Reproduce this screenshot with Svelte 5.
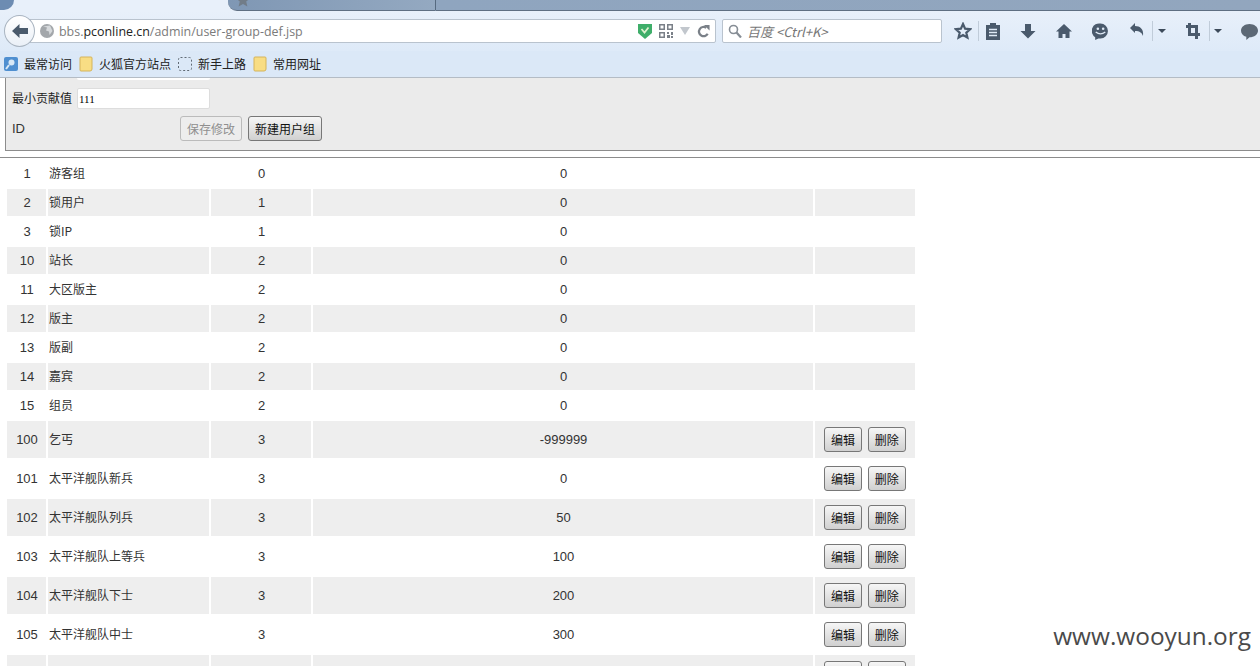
<script>
	const rows = [
		{ id: 1, name: '游客组', type: 0, min: 0 },
		{ id: 2, name: '锁用户', type: 1, min: 0 },
		{ id: 3, name: '锁IP', type: 1, min: 0 },
		{ id: 10, name: '站长', type: 2, min: 0 },
		{ id: 11, name: '大区版主', type: 2, min: 0 },
		{ id: 12, name: '版主', type: 2, min: 0 },
		{ id: 13, name: '版副', type: 2, min: 0 },
		{ id: 14, name: '嘉宾', type: 2, min: 0 },
		{ id: 15, name: '组员', type: 2, min: 0 },
		{ id: 100, name: '乞丐', type: 3, min: -999999, edit: true },
		{ id: 101, name: '太平洋舰队新兵', type: 3, min: 0, edit: true },
		{ id: 102, name: '太平洋舰队列兵', type: 3, min: 50, edit: true },
		{ id: 103, name: '太平洋舰队上等兵', type: 3, min: 100, edit: true },
		{ id: 104, name: '太平洋舰队下士', type: 3, min: 200, edit: true },
		{ id: 105, name: '太平洋舰队中士', type: 3, min: 300, edit: true },
		{ id: '', name: '', type: '', min: '', edit: true }
	];
</script>

<div class="browser">
	<div class="tabs">
		<div class="tab-corner"></div>
		<div class="tab active"></div>
		<div class="tab other">
			<svg class="star" viewBox="0 0 14 14"><path d="M7 0l2 5 5 .4-3.800 3.200 1.200 5L7 11l-4.400 2.600 1.200-5L0 5.400 5 5z" fill="#717c88" /></svg>
		</div>
		<div class="tab-rest"></div>
	</div>

	<div class="nav">
		<div class="urlbar">
			<span class="back">
				<svg viewBox="0 0 16 14" width="16" height="14"><path d="M0 7l7.500-7v4H16v6H7.500v4z" fill="#4a5a6c" /></svg>
			</span>
			<svg class="globe" viewBox="0 0 14 14" width="14" height="14"><circle cx="7" cy="7" r="7" fill="#a3a7ab" /><path d="M3 2.500l4 1-1 3 3 1 .5 3.500 3-4-2.500-5.500z" fill="#d6d9dc" /></svg>
			<span class="url">bbs.<b>pconline.cn</b>/admin/user-group-def.jsp</span>
			<span class="url-icons">
				<svg viewBox="0 0 14 16" width="14" height="16"><path d="M0 1h14v9l-7 6-7-6z" fill="#3fae6a" /><path d="M3.500 6L6.500 9.500l4-5" stroke="#dff2cf" stroke-width="1.800" fill="none" /></svg>
				<svg viewBox="0 0 14 14" width="14" height="14"><path d="M0 0h6v6H0zM1.500 1.500v3h3v-3zM8 0h6v6H8zM9.500 1.500v3h3v-3zM0 8h6v6H0zM1.500 9.500v3h3v-3zM8 8h2v2H8zM12 8h2v3h-2zM8 11h3v3H8zM12 12h2v2h-2z" fill="#7a8088" fill-rule="evenodd" /></svg>
				<svg viewBox="0 0 10 8" width="10" height="8"><path d="M0 0h10L5 8z" fill="#c2c7cd" /></svg>
				<svg viewBox="0 0 14 14" width="13" height="13"><path d="M11.500 9.500A5 5 0 1 1 10 3" stroke="#7a8088" stroke-width="2.400" fill="none" /><path d="M7.500 0H13.500V6z" fill="#7a8088" /></svg>
			</span>
		</div>
		<div class="search">
			<svg viewBox="0 0 14 14" width="14" height="14"><circle cx="5.500" cy="5.500" r="4" stroke="#868d95" stroke-width="1.600" fill="none" /><path d="M8.500 8.500l4.500 5" stroke="#868d95" stroke-width="2.200" /></svg>
			<span>百度 &lt;Ctrl+K&gt;</span>
		</div>
		<div class="tools">
			<svg viewBox="0 0 18 18" width="18" height="18"><path d="M9 2l2.100 4.700 5 .5-3.800 3.400 1.100 5L9 13l-4.400 2.600 1.100-5-3.800-3.400 5-.5z" fill="none" stroke="#4a5a6c" stroke-width="2.200" /></svg>
			<i class="sep"></i>
			<svg viewBox="0 0 16 18" width="16" height="18"><path d="M1 3h4V1h6v2h4v15H1z" fill="#4a5a6c" /><path d="M4 7.500h8M4 10.500h8M4 13.500h8" stroke="#dfeaf6" stroke-width="1.300" /></svg>
			<svg class="gap1" viewBox="0 0 16 16" width="16" height="16"><path d="M5 1h6v7h4.500L8 15.500.5 8H5z" fill="#4a5a6c" /></svg>
			<svg class="gap2" viewBox="0 0 16 16" width="16" height="16"><path d="M8 1L0 8.500h2.500V15h4v-4h3v4h4V8.500H16z" fill="#4a5a6c" /></svg>
			<svg class="gap3" viewBox="0 0 16 16" width="17" height="17"><path d="M8 0.500a7 7 0 0 1 0 14H6L3 16v-2.700A7 7 0 0 1 8 .5z" fill="#4a5a6c" /><circle cx="5.500" cy="5.500" r="1.200" fill="#dfeaf6" /><circle cx="10.500" cy="5.500" r="1.200" fill="#dfeaf6" /><path d="M3.500 8.500q4.500 3.500 9 0" stroke="#dfeaf6" fill="none" stroke-width="1.300" /></svg>
			<svg class="gap4" viewBox="0 0 14 16" width="14" height="16"><path d="M0 5l5-5v3c5 0 9 3 8 10-1-3-3-5-8-5v2z" fill="#4a5a6c" /></svg>
			<i class="sep small"></i>
			<b class="caret"></b>
			<svg class="gap5" viewBox="0 0 14 16" width="14" height="16"><path d="M3.500 0v11.500H14M0 3.500h10.500V16" fill="none" stroke="#4a5a6c" stroke-width="3" /></svg>
			<i class="sep small last"></i>
			<b class="caret"></b>
			<svg class="gap6" viewBox="0 0 16 16" width="17" height="17"><path d="M8 1c4.400 0 8 2.700 8 6.200s-3.600 6.200-8 6.200L5 16v-3C2 12 0 9.800 0 7.200 0 3.700 3.600 1 8 1z" fill="#5c6875" /></svg>
		</div>
	</div>

	<div class="bookmarks">
		<span class="mark">
			<svg viewBox="0 0 14 14" width="14" height="14"><rect width="14" height="14" rx="2" fill="#4f8fd0" /><circle cx="7.500" cy="5.500" r="3" fill="#d8e8f6" /><path d="M5 8l-3 4" stroke="#d8e8f6" stroke-width="2" /></svg>
			最常访问
		</span>
		<span class="mark">
			<svg viewBox="0 0 14 16" width="14" height="16"><path d="M1 2q0-1 1-1h10q1 0 1 1v11q0 2-2 2H2q-1 0-1-1z" fill="#f8dd84" stroke="#d5b45a" /></svg>
			火狐官方站点
		</span>
		<span class="mark">
			<svg viewBox="0 0 14 14" width="14" height="14"><rect x=".5" y=".5" width="13" height="13" rx="2" fill="none" stroke="#606a74" stroke-dasharray="2 2" /></svg>
			新手上路
		</span>
		<span class="mark">
			<svg viewBox="0 0 14 16" width="14" height="16"><path d="M1 2q0-1 1-1h10q1 0 1 1v11q0 2-2 2H2q-1 0-1-1z" fill="#f8dd84" stroke="#d5b45a" /></svg>
			常用网址
		</span>
	</div>

	<div class="page">
		<div class="panel">
			<div class="clipped"></div>
			<div class="field">
				<label for="min">最小贡献值</label>
				<input id="min" value="111" />
			</div>
			<div class="field actions">
				<span class="id-label">ID</span>
				<button disabled>保存修改</button>
				<button>新建用户组</button>
			</div>
		</div>
		<hr />
		<table>
			<colgroup>
				<col class="c1" />
				<col class="c2" />
				<col class="c3" />
				<col class="c4" />
				<col class="c5" />
			</colgroup>
			<tbody>
				{#each rows as row, i}
					<tr class:odd={i % 2 == 1} class:tall={row.edit}>
						<td class="center">{row.id}</td>
						<td>{row.name}</td>
						<td class="center">{row.type}</td>
						<td class="center">{row.min}</td>
						<td class="ops">
							{#if row.edit}
								<button>编辑</button>
								<button>删除</button>
							{/if}
						</td>
					</tr>
				{/each}
			</tbody>
		</table>
	</div>

	<div class="watermark">www.wooyun.org</div>
</div>

<style>
	:global(body) {
		margin: 0;
		background: #fff;
	}
	.browser {
		position: relative;
		height: 666px;
		overflow: hidden;
		font-family: "Noto Sans CJK SC", "Liberation Sans", sans-serif;
		font-size: 12px;
		color: #222;
	}
	.tabs {
		display: flex;
		height: 11px;
		background: #e8f0fa;
	}
	.tab-corner {
		width: 14px;
		height: 10px;
		background: #6d8cb2;
		border-radius: 0 0 10px 0;
	}
	.tab.active {
		width: 214px;
	}
	.tab.other {
		width: 208px;
		height: 11px;
		background: linear-gradient(90deg, #7f97b4, #94a9c1);
		border-bottom: 1px solid #5f6f82;
		border-right: 1px solid #566a80;
		border-radius: 0 0 0 9px;
		box-sizing: border-box;
		overflow: hidden;
	}
	.star {
		display: block;
		width: 14px;
		height: 14px;
		margin: -7px 0 0 8px;
	}
	.tab-rest {
		flex: 1;
		height: 11px;
		box-sizing: border-box;
		background: linear-gradient(90deg, #8fa5bf, #92a6be);
		border-bottom: 1px solid #5f6f82;
	}
	.nav {
		display: flex;
		align-items: center;
		height: 40px;
		background: linear-gradient(#e8f0fa, #deeaf8);
	}
	.urlbar {
		position: relative;
		display: flex;
		align-items: center;
		width: 706px;
		height: 24px;
		margin-left: 10px;
		padding-left: 29px;
		box-sizing: border-box;
		background: #fff;
		border: 1px solid #b9c3ce;
		border-radius: 2px;
	}
	.back {
		position: absolute;
		left: -7px;
		top: -5px;
		width: 31px;
		height: 32px;
		display: flex;
		align-items: center;
		justify-content: center;
		box-sizing: border-box;
		border-radius: 50%;
		background: linear-gradient(#fff, #eaf0f7);
		border: 1px solid #a9b4c0;
	}
	.globe {
		flex: none;
	}
	.url {
		margin-left: 5px;
		font-family: "Open Sans", "Liberation Sans", sans-serif;
		font-size: 12.450px;
		color: #7b7b7b;
	}
	.url b {
		font-weight: 400;
		color: #222;
	}
	.url-icons {
		display: flex;
		align-items: center;
		gap: 7px;
		margin-left: auto;
		margin-right: 5px;
	}
	.search {
		display: flex;
		align-items: center;
		gap: 5px;
		width: 220px;
		height: 24px;
		margin-left: 6px;
		padding-left: 5px;
		box-sizing: border-box;
		background: #fff;
		border: 1px solid #b9c3ce;
		border-radius: 2px;
		font-size: 13px;
		font-style: italic;
		color: #777;
	}
	.tools {
		display: flex;
		align-items: center;
		margin-left: 12px;
		white-space: nowrap;
	}
	.tools svg {
		flex: none;
	}
	.sep {
		width: 1px;
		height: 20px;
		margin: 0 6px;
		background: #c0ccd9;
	}
	.sep.small {
		margin: 0 5px 0 8px;
	}
	.sep.small.last {
		margin: 0 4px 0 9px;
	}
	.caret {
		width: 0;
		height: 0;
		border: 4px solid transparent;
		border-top: 4px solid #3c4a5a;
		border-bottom: 0;
	}
	.gap1 { margin-left: 19px; }
	.gap2 { margin-left: 20px; }
	.gap3 { margin-left: 20px; }
	.gap4 { margin-left: 21px; }
	.gap5 { margin-left: 20px; }
	.gap6 { margin-left: 19px; }
	.bookmarks {
		display: flex;
		align-items: center;
		gap: 7px;
		height: 25px;
		padding: 0 0 1px 4px;
		background: #dbe8f7;
		border-bottom: 1px solid #b4bcc5;
	}
	.mark {
		display: flex;
		align-items: center;
		gap: 6px;
		font-size: 12px;
		color: #222;
	}
	.panel {
		height: 73px;
		margin-left: 5px;
		padding-left: 6px;
		box-sizing: border-box;
		background: #ebebeb;
		border-left: 1px solid #8c8c8c;
		border-bottom: 1px solid #8c8c8c;
	}
	.clipped {
		width: 133px;
		height: 2px;
		margin-left: 65px;
		background: #fff;
		border-radius: 0 0 2px 2px;
	}
	.field {
		display: flex;
		align-items: center;
		margin-top: 8px;
	}
	.field label {
		width: 65px;
		padding-bottom: 2px;
	}
	.field input {
		width: 133px;
		height: 21px;
		padding: 0 1px;
		box-sizing: border-box;
		border: 1px solid #ddd;
		border-radius: 2px;
		font-family: "Liberation Serif", serif;
		font-size: 11px;
		background: #fff;
	}
	.actions {
		margin-top: 7px;
	}
	.id-label {
		width: 168px;
		font-family: "Liberation Sans", sans-serif;
		font-size: 13px;
		color: #333;
	}
	.actions button {
		height: 25px;
		margin-right: 6px;
		padding: 0 6px;
	}
	button {
		font-family: "Noto Sans CJK SC", sans-serif;
		font-size: 12px;
		color: #111;
		border: 1px solid #777;
		border-radius: 3px;
		background: linear-gradient(#f6f6f6, #d0d0d0);
	}
	button:disabled {
		color: #8f8f8f;
		background: #ededed;
		border-color: #bbb;
	}
	hr {
		height: 1px;
		margin: 6px 0 0;
		border: 0;
		background: #8c8c8c;
	}
	table {
		margin-left: 5px;
		width: 912px;
		border-spacing: 2px;
		table-layout: fixed;
		font-size: 12px;
		color: #333;
	}
	.c1 { width: 39px; }
	.c2 { width: 161px; }
	.c3 { width: 100px; }
	.c4 { width: 500px; }
	.c5 { width: 100px; }
	td {
		height: 27px;
		padding: 0 2px 2px 1px;
		box-sizing: border-box;
	}
	tr.tall td {
		height: 37px;
	}
	tr.odd td {
		background: #eee;
	}
	.center {
		padding: 0 1px 0 2px;
		text-align: center;
		font-family: "Liberation Sans", sans-serif;
		font-size: 13px;
	}
	.ops {
		padding: 0 0 0 9px;
		white-space: nowrap;
	}
	.ops button {
		width: 38px;
		height: 25px;
		padding: 0;
		margin-right: 3px;
	}
	.watermark {
		position: absolute;
		right: 9px;
		top: 619px;
		font-family: "Open Sans", "Liberation Sans", sans-serif;
		font-size: 24.400px;
		color: #4a4a4a;
	}
</style>
